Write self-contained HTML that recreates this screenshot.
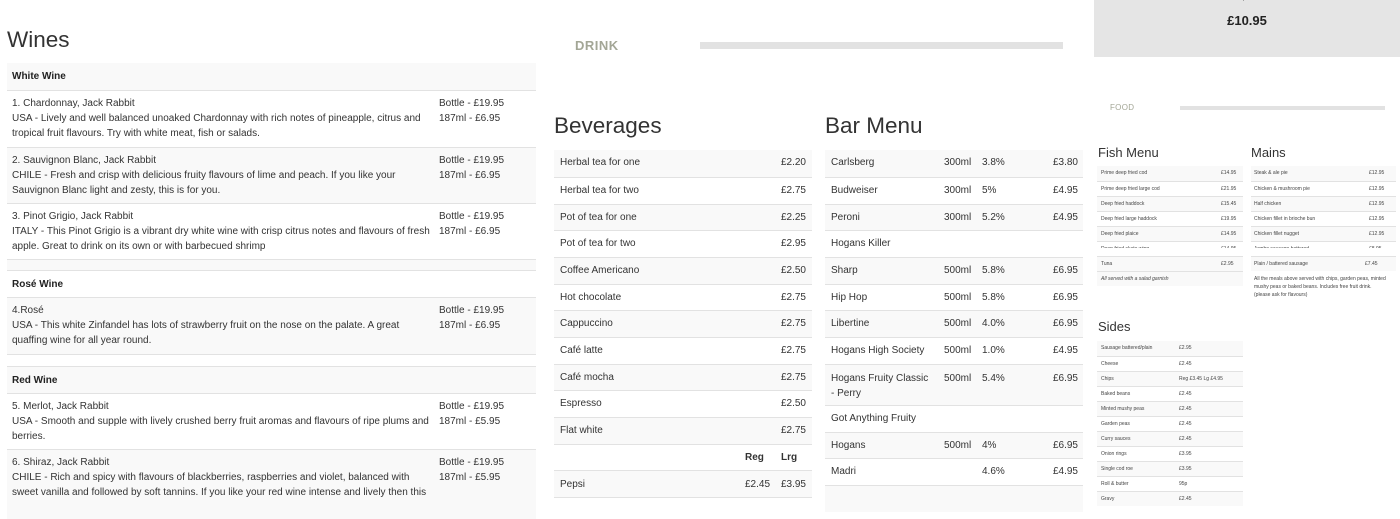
<!DOCTYPE html>
<html><head><meta charset="utf-8"><style>
body{margin:0;width:1400px;height:500px;overflow:hidden;background:#fff;font-family:"Liberation Sans",sans-serif;color:#333;position:relative}
.a{position:absolute}
.r{position:absolute;border-top:1px solid #e2e2e2;box-sizing:border-box}
.s{background:#f9f9f9}
.t{position:absolute;white-space:nowrap}
h1,h2{margin:0;font-weight:normal;position:absolute}
.w{font-size:10px;line-height:15px}
.ww{white-space:normal;width:420px}
.b{font-size:10px;line-height:26px}
.f{font-size:5px;line-height:15px;color:#444}
</style></head><body>

<h1 style="left:7px;top:25px;font-size:22.5px;line-height:30px">Wines</h1>
<div class="a" style="left:7px;top:63px;width:529px;height:450px">
 <div class="r s" style="top:0;height:27px;width:529px;border-top:0"><b class="t w" style="left:5px;top:6px;color:#222">White Wine</b></div>
 <div class="r" style="top:27px;height:57px;width:529px"><div class="t w ww" style="left:5px;top:5px">1. Chardonnay, Jack Rabbit<br>USA - Lively and well balanced unoaked Chardonnay with rich notes of pineapple, citrus and tropical fruit flavours. Try with white meat, fish or salads.</div><div class="t w" style="left:432px;top:5px">Bottle - £19.95<br>187ml - £6.95</div></div>
 <div class="r s" style="top:84px;height:56px;width:529px"><div class="t w ww" style="left:5px;top:5px;width:400px">2. Sauvignon Blanc, Jack Rabbit<br>CHILE - Fresh and crisp with delicious fruity flavours of lime and peach. If you like your Sauvignon Blanc light and zesty, this is for you.</div><div class="t w" style="left:432px;top:5px">Bottle - £19.95<br>187ml - £6.95</div></div>
 <div class="r" style="top:140px;height:56px;width:529px"><div class="t w ww" style="left:5px;top:5px">3. Pinot Grigio, Jack Rabbit<br>ITALY - This Pinot Grigio is a vibrant dry white wine with crisp citrus notes and flavours of fresh apple. Great to drink on its own or with barbecued shrimp</div><div class="t w" style="left:432px;top:5px">Bottle - £19.95<br>187ml - £6.95</div></div>
 <div class="r s" style="top:196px;height:11px;width:529px"></div>
 <div class="r" style="top:207px;height:27px;width:529px"><b class="t w" style="left:5px;top:6px;color:#222">Rosé Wine</b></div>
 <div class="r s" style="top:234px;height:57px;width:529px"><div class="t w ww" style="left:5px;top:5px;width:395px">4.Rosé<br>USA - This white Zinfandel has lots of strawberry fruit on the nose on the palate. A great quaffing wine for all year round.</div><div class="t w" style="left:432px;top:5px">Bottle - £19.95<br>187ml - £6.95</div></div>
 <div class="r" style="top:291px;height:12px;width:529px"></div>
 <div class="r s" style="top:303px;height:27px;width:529px"><b class="t w" style="left:5px;top:6px;color:#222">Red Wine</b></div>
 <div class="r" style="top:330px;height:56px;width:529px"><div class="t w ww" style="left:5px;top:5px">5. Merlot, Jack Rabbit<br>USA - Smooth and supple with lively crushed berry fruit aromas and flavours of ripe plums and berries.</div><div class="t w" style="left:432px;top:5px">Bottle - £19.95<br>187ml - £5.95</div></div>
 <div class="r s" style="top:386px;height:70px;width:529px"><div class="t w ww" style="left:5px;top:5px;width:416px">6. Shiraz, Jack Rabbit<br>CHILE - Rich and spicy with flavours of blackberries, raspberries and violet, balanced with sweet vanilla and followed by soft tannins. If you like your red wine intense and lively then this</div><div class="t w" style="left:432px;top:5px">Bottle - £19.95<br>187ml - £5.95</div></div>
</div>

<div class="t" style="left:575px;top:38px;font-size:13px;font-weight:bold;color:#a3a696;letter-spacing:.5px">DRINK</div>
<div class="a" style="left:700px;top:42px;width:363px;height:7px;background:#e2e2e2"></div>

<h2 style="left:554px;top:112px;font-size:22.5px;line-height:28px">Beverages</h2>
<div class="a" style="left:554px;top:150px;width:258px;height:360px">
 <div class="r s" style="top:0;height:27px;width:258px;border-top:0"><span class="t b" style="left:6px">Herbal tea for one</span><span class="t b" style="right:6px">£2.20</span></div>
 <div class="r" style="top:27px;height:27px;width:258px"><span class="t b" style="left:6px">Herbal tea for two</span><span class="t b" style="right:6px">£2.75</span></div>
 <div class="r s" style="top:54px;height:26px;width:258px"><span class="t b" style="left:6px">Pot of tea for one</span><span class="t b" style="right:6px">£2.25</span></div>
 <div class="r" style="top:80px;height:27px;width:258px"><span class="t b" style="left:6px">Pot of tea for two</span><span class="t b" style="right:6px">£2.95</span></div>
 <div class="r s" style="top:107px;height:27px;width:258px"><span class="t b" style="left:6px">Coffee Americano</span><span class="t b" style="right:6px">£2.50</span></div>
 <div class="r" style="top:134px;height:26px;width:258px"><span class="t b" style="left:6px">Hot chocolate</span><span class="t b" style="right:6px">£2.75</span></div>
 <div class="r s" style="top:160px;height:27px;width:258px"><span class="t b" style="left:6px">Cappuccino</span><span class="t b" style="right:6px">£2.75</span></div>
 <div class="r" style="top:187px;height:27px;width:258px"><span class="t b" style="left:6px">Café latte</span><span class="t b" style="right:6px">£2.75</span></div>
 <div class="r s" style="top:214px;height:26px;width:258px"><span class="t b" style="left:6px">Café mocha</span><span class="t b" style="right:6px">£2.75</span></div>
 <div class="r" style="top:240px;height:27px;width:258px"><span class="t b" style="left:6px">Espresso</span><span class="t b" style="right:6px">£2.50</span></div>
 <div class="r s" style="top:267px;height:27px;width:258px"><span class="t b" style="left:6px">Flat white</span><span class="t b" style="right:6px">£2.75</span></div>
 <div class="r" style="top:294px;height:26px;width:258px"><b class="t b" style="left:191px">Reg</b><b class="t b" style="left:227px">Lrg</b></div>
 <div class="r s" style="top:320px;height:28px;width:258px;border-bottom:1px solid #e2e2e2"><span class="t b" style="left:6px;line-height:27px">Pepsi</span><span class="t b" style="left:191px;line-height:27px">£2.45</span><span class="t b" style="right:6px;line-height:27px">£3.95</span></div>
</div>

<h2 style="left:825px;top:112px;font-size:22.5px;line-height:28px">Bar Menu</h2>
<div class="a" style="left:825px;top:150px;width:258px;height:360px">
 <div class="r s" style="top:0;height:27px;width:258px;border-top:0"><span class="t b" style="left:6px">Carlsberg</span><span class="t b" style="left:119px">300ml</span><span class="t b" style="left:157px">3.8%</span><span class="t b" style="right:5px">£3.80</span></div>
 <div class="r" style="top:27px;height:27px;width:258px"><span class="t b" style="left:6px">Budweiser</span><span class="t b" style="left:119px">300ml</span><span class="t b" style="left:157px">5%</span><span class="t b" style="right:5px">£4.95</span></div>
 <div class="r s" style="top:54px;height:26px;width:258px"><span class="t b" style="left:6px">Peroni</span><span class="t b" style="left:119px">300ml</span><span class="t b" style="left:157px">5.2%</span><span class="t b" style="right:5px">£4.95</span></div>
 <div class="r" style="top:80px;height:27px;width:258px"><span class="t b" style="left:6px">Hogans Killer</span></div>
 <div class="r s" style="top:107px;height:27px;width:258px"><span class="t b" style="left:6px">Sharp</span><span class="t b" style="left:119px">500ml</span><span class="t b" style="left:157px">5.8%</span><span class="t b" style="right:5px">£6.95</span></div>
 <div class="r" style="top:134px;height:26px;width:258px"><span class="t b" style="left:6px">Hip Hop</span><span class="t b" style="left:119px">500ml</span><span class="t b" style="left:157px">5.8%</span><span class="t b" style="right:5px">£6.95</span></div>
 <div class="r s" style="top:160px;height:27px;width:258px"><span class="t b" style="left:6px">Libertine</span><span class="t b" style="left:119px">500ml</span><span class="t b" style="left:157px">4.0%</span><span class="t b" style="right:5px">£6.95</span></div>
 <div class="r" style="top:187px;height:27px;width:258px"><span class="t b" style="left:6px">Hogans High Society</span><span class="t b" style="left:119px">500ml</span><span class="t b" style="left:157px">1.0%</span><span class="t b" style="right:5px">£4.95</span></div>
 <div class="r s" style="top:214px;height:41px;width:258px"><span class="t w" style="left:6px;top:6px">Hogans Fruity Classic<br>- Perry</span><span class="t w" style="left:119px;top:6px">500ml</span><span class="t w" style="left:157px;top:6px">5.4%</span><span class="t w" style="right:5px;top:6px">£6.95</span></div>
 <div class="r" style="top:255px;height:27px;width:258px"><span class="t b" style="left:6px">Got Anything Fruity</span></div>
 <div class="r s" style="top:282px;height:26px;width:258px"><span class="t b" style="left:6px">Hogans</span><span class="t b" style="left:119px">500ml</span><span class="t b" style="left:157px">4%</span><span class="t b" style="right:5px">£6.95</span></div>
 <div class="r" style="top:308px;height:27px;width:258px"><span class="t b" style="left:6px">Madri</span><span class="t b" style="left:157px">4.6%</span><span class="t b" style="right:5px">£4.95</span></div>
 <div class="r s" style="top:335px;height:27px;width:258px"></div>
</div>

<div class="a" style="left:1094px;top:0;width:306px;height:57px;background:#e5e5e5"></div>
<div class="t" style="left:1094px;width:306px;text-align:center;top:-4px;font-size:5px;color:#555">and a pot of tea.</div>
<div class="t" style="left:1094px;width:306px;text-align:center;top:13px;font-size:13px;font-weight:bold;color:#222">£10.95</div>

<div class="t" style="left:1110px;top:103px;font-size:8px;color:#a3a696;letter-spacing:.3px">FOOD</div>
<div class="a" style="left:1180px;top:106px;width:205px;height:4px;background:#e2e2e2"></div>

<h2 style="left:1098px;top:145px;font-size:13px;line-height:16px">Fish Menu</h2>
<div class="a" style="left:1097px;top:166px;width:146px;height:82px;overflow:hidden">
 <div class="r s" style="top:0;height:15px;width:146px;border-top:0"><span class="t f" style="left:4px">Prime deep fried cod</span><span class="t f" style="left:124px">£14.95</span></div>
 <div class="r" style="top:15px;height:15px;width:146px"><span class="t f" style="left:4px">Prime deep fried large cod</span><span class="t f" style="left:124px">£21.95</span></div>
 <div class="r s" style="top:30px;height:15px;width:146px"><span class="t f" style="left:4px">Deep fried haddock</span><span class="t f" style="left:124px">£15.45</span></div>
 <div class="r" style="top:45px;height:15px;width:146px"><span class="t f" style="left:4px">Deep fried large haddock</span><span class="t f" style="left:124px">£19.95</span></div>
 <div class="r s" style="top:60px;height:15px;width:146px"><span class="t f" style="left:4px">Deep fried plaice</span><span class="t f" style="left:124px">£14.95</span></div>
 <div class="r" style="top:75px;height:15px;width:146px"><span class="t f" style="left:4px">Deep fried skate wing</span><span class="t f" style="left:124px">£14.95</span></div>
</div>
<div class="a" style="left:1097px;top:256px;width:146px;height:30px">
 <div class="r s" style="top:0;height:15px;width:146px"><span class="t f" style="left:4px">Tuna</span><span class="t f" style="left:124px">£2.95</span></div>
 <div class="r s" style="top:15px;height:15px;width:146px"><i class="t f" style="left:4px">All served with a salad garnish</i></div>
</div>

<h2 style="left:1251px;top:145px;font-size:13px;line-height:16px">Mains</h2>
<div class="a" style="left:1251px;top:166px;width:145px;height:82px;overflow:hidden">
 <div class="r s" style="top:0;height:15px;width:145px;border-top:0"><span class="t f" style="left:3px">Steak &amp; ale pie</span><span class="t f" style="left:118px">£12.95</span></div>
 <div class="r" style="top:15px;height:15px;width:145px"><span class="t f" style="left:3px">Chicken &amp; mushroom pie</span><span class="t f" style="left:118px">£12.95</span></div>
 <div class="r s" style="top:30px;height:15px;width:145px"><span class="t f" style="left:3px">Half chicken</span><span class="t f" style="left:118px">£12.95</span></div>
 <div class="r" style="top:45px;height:15px;width:145px"><span class="t f" style="left:3px">Chicken fillet in brioche bun</span><span class="t f" style="left:118px">£12.95</span></div>
 <div class="r s" style="top:60px;height:15px;width:145px"><span class="t f" style="left:3px">Chicken fillet nugget</span><span class="t f" style="left:118px">£12.95</span></div>
 <div class="r" style="top:75px;height:15px;width:145px"><span class="t f" style="left:3px">Jumbo sausage battered</span><span class="t f" style="left:118px">£8.95</span></div>
</div>
<div class="a" style="left:1251px;top:256px;width:145px;height:50px">
 <div class="r s" style="top:0;height:15px;width:145px"><span class="t f" style="left:3px">Plain / battered sausage</span><span class="t f" style="left:114px">£7.45</span></div>
 <div class="r" style="top:15px;height:35px;width:145px;border-top:0"><div class="a" style="left:3px;top:4px;width:132px;font-size:5px;line-height:8px;color:#444">All the meals above served with chips, garden peas, minted mushy peas or baked beans. Includes free fruit drink. (please ask for flavours)</div></div>
</div>

<h2 style="left:1098px;top:319px;font-size:13px;line-height:16px">Sides</h2>
<div class="a" style="left:1097px;top:341px;width:146px;height:170px">
 <div class="r s" style="top:0;height:15px;width:146px;border-top:0"><span class="t f" style="left:4px">Sausage battered/plain</span><span class="t f" style="left:82px">£2.95</span></div>
 <div class="r" style="top:15px;height:15px;width:146px"><span class="t f" style="left:4px">Cheese</span><span class="t f" style="left:82px">£2.45</span></div>
 <div class="r s" style="top:30px;height:15px;width:146px"><span class="t f" style="left:4px">Chips</span><span class="t f" style="left:82px">Reg £3.45 Lg £4.95</span></div>
 <div class="r" style="top:45px;height:15px;width:146px"><span class="t f" style="left:4px">Baked beans</span><span class="t f" style="left:82px">£2.45</span></div>
 <div class="r s" style="top:60px;height:15px;width:146px"><span class="t f" style="left:4px">Minted mushy peas</span><span class="t f" style="left:82px">£2.45</span></div>
 <div class="r" style="top:75px;height:15px;width:146px"><span class="t f" style="left:4px">Garden peas</span><span class="t f" style="left:82px">£2.45</span></div>
 <div class="r s" style="top:90px;height:15px;width:146px"><span class="t f" style="left:4px">Curry sauces</span><span class="t f" style="left:82px">£2.45</span></div>
 <div class="r" style="top:105px;height:15px;width:146px"><span class="t f" style="left:4px">Onion rings</span><span class="t f" style="left:82px">£3.95</span></div>
 <div class="r s" style="top:120px;height:15px;width:146px"><span class="t f" style="left:4px">Single cod roe</span><span class="t f" style="left:82px">£3.95</span></div>
 <div class="r" style="top:135px;height:15px;width:146px"><span class="t f" style="left:4px">Roll &amp; butter</span><span class="t f" style="left:82px">95p</span></div>
 <div class="r s" style="top:150px;height:15px;width:146px"><span class="t f" style="left:4px">Gravy</span><span class="t f" style="left:82px">£2.45</span></div>
</div>
</body></html>
